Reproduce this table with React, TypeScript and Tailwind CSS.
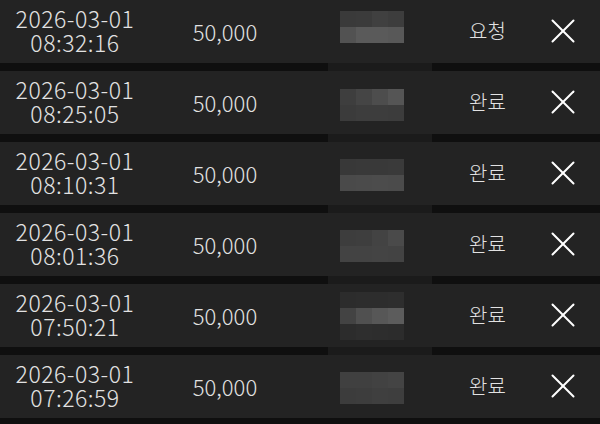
import { X } from 'lucide-react'

type Row = { date: string; time: string; amount: string; status: string; mosaic: string[][]; offset: string }

const rows: Row[] = [
    {
        date: '2026-03-01', time: '08:32:16', amount: '50,000', status: '요청', offset: '-mt-[10px]',
        mosaic: [
            ['#3a3a3a', '#3b3b3b', '#404040', '#3d3d3d'],
            ['#525252', '#5a5a5a', '#5a5a5a', '#585858'],
        ],
    },
    {
        date: '2026-03-01', time: '08:25:05', amount: '50,000', status: '완료', offset: 'mt-[4px]',
        mosaic: [
            ['#3e3e3e', '#454545', '#4d4d4d', '#555555'],
            ['#3b3b3b', '#3d3d3d', '#3d3d3d', '#3c3c3c'],
        ],
    },
    {
        date: '2026-03-01', time: '08:10:31', amount: '50,000', status: '완료', offset: 'mt-[2px]',
        mosaic: [
            ['#383838', '#393939', '#393939', '#3a3a3a'],
            ['#4a4a4a', '#4b4b4b', '#4c4c4c', '#4b4b4b'],
        ],
    },
    {
        date: '2026-03-01', time: '08:01:36', amount: '50,000', status: '완료', offset: 'mt-[2px]',
        mosaic: [
            ['#3d3d3d', '#3e3e3e', '#434343', '#4a4a4a'],
            ['#434343', '#434343', '#444444', '#434343'],
        ],
    },
    {
        date: '2026-03-01', time: '07:50:21', amount: '50,000', status: '완료', offset: 'mt-[0px]',
        mosaic: [
            ['#2c2c2c', '#2d2d2d', '#2d2d2d', '#2e2e2e'],
            ['#434343', '#505050', '#575757', '#5c5c5c'],
            ['#2c2c2c', '#2e2e2e', '#2d2d2d', '#2c2c2c'],
        ],
    },
    {
        date: '2026-03-01', time: '07:26:59', amount: '50,000', status: '완료', offset: 'mt-[2px]',
        mosaic: [
            ['#404040', '#404040', '#424242', '#444444'],
            ['#3c3c3c', '#3d3d3d', '#3f3f3f', '#3e3e3e'],
        ],
    },
]

function Mosaic({ cells, offset }: { cells: string[][]; offset: string }) {
    return (
        <div className={`flex flex-col ml-[-7px] ${offset}`}>
            {cells.map((line, i) => (
                <div key={i} className="flex">
                    {line.map((c, j) => (
                        <div key={j} className="w-[16px] h-[16px]" style={{ backgroundColor: c }} />
                    ))}
                </div>
            ))}
        </div>
    )
}

export default function App() {
    return (
        <div
            className="w-[600px] h-[424px] bg-[#0f0f0f] flex flex-col overflow-hidden text-[#e2e2e2] font-light"
            style={{ fontFamily: '"Noto Sans CJK KR", "Noto Sans", sans-serif' }}
        >
            {rows.map((r, i) => (
                <div key={i} className="flex flex-col">
                    {i > 0 && (
                        <div className="h-[8px] flex">
                            <div className="w-[328px]" />
                            <div className="w-[104px] bg-[#1b1b1b]" />
                        </div>
                    )}
                    <div className="h-[63px] bg-[#232323] grid grid-cols-[150px_150px_150px_75px_75px] items-center">
                        <div className="flex flex-col items-center text-[23px] leading-[24px] tracking-[0.5px] -mt-[3px]">
                            <span>{r.date}</span>
                            <span>{r.time}</span>
                        </div>
                        <div className="text-center text-[22px] leading-none -mt-[2px]">{r.amount}</div>
                        <div className="flex justify-center">
                            <Mosaic cells={r.mosaic} offset={r.offset} />
                        </div>
                        <div className="text-center text-[20px] leading-none -mt-[2px]">{r.status}</div>
                        <div className="flex justify-center -mt-[2px]">
                            <X className="w-[42px] h-[42px] text-white" strokeWidth={1.15} />
                        </div>
                    </div>
                </div>
            ))}
        </div>
    )
}
